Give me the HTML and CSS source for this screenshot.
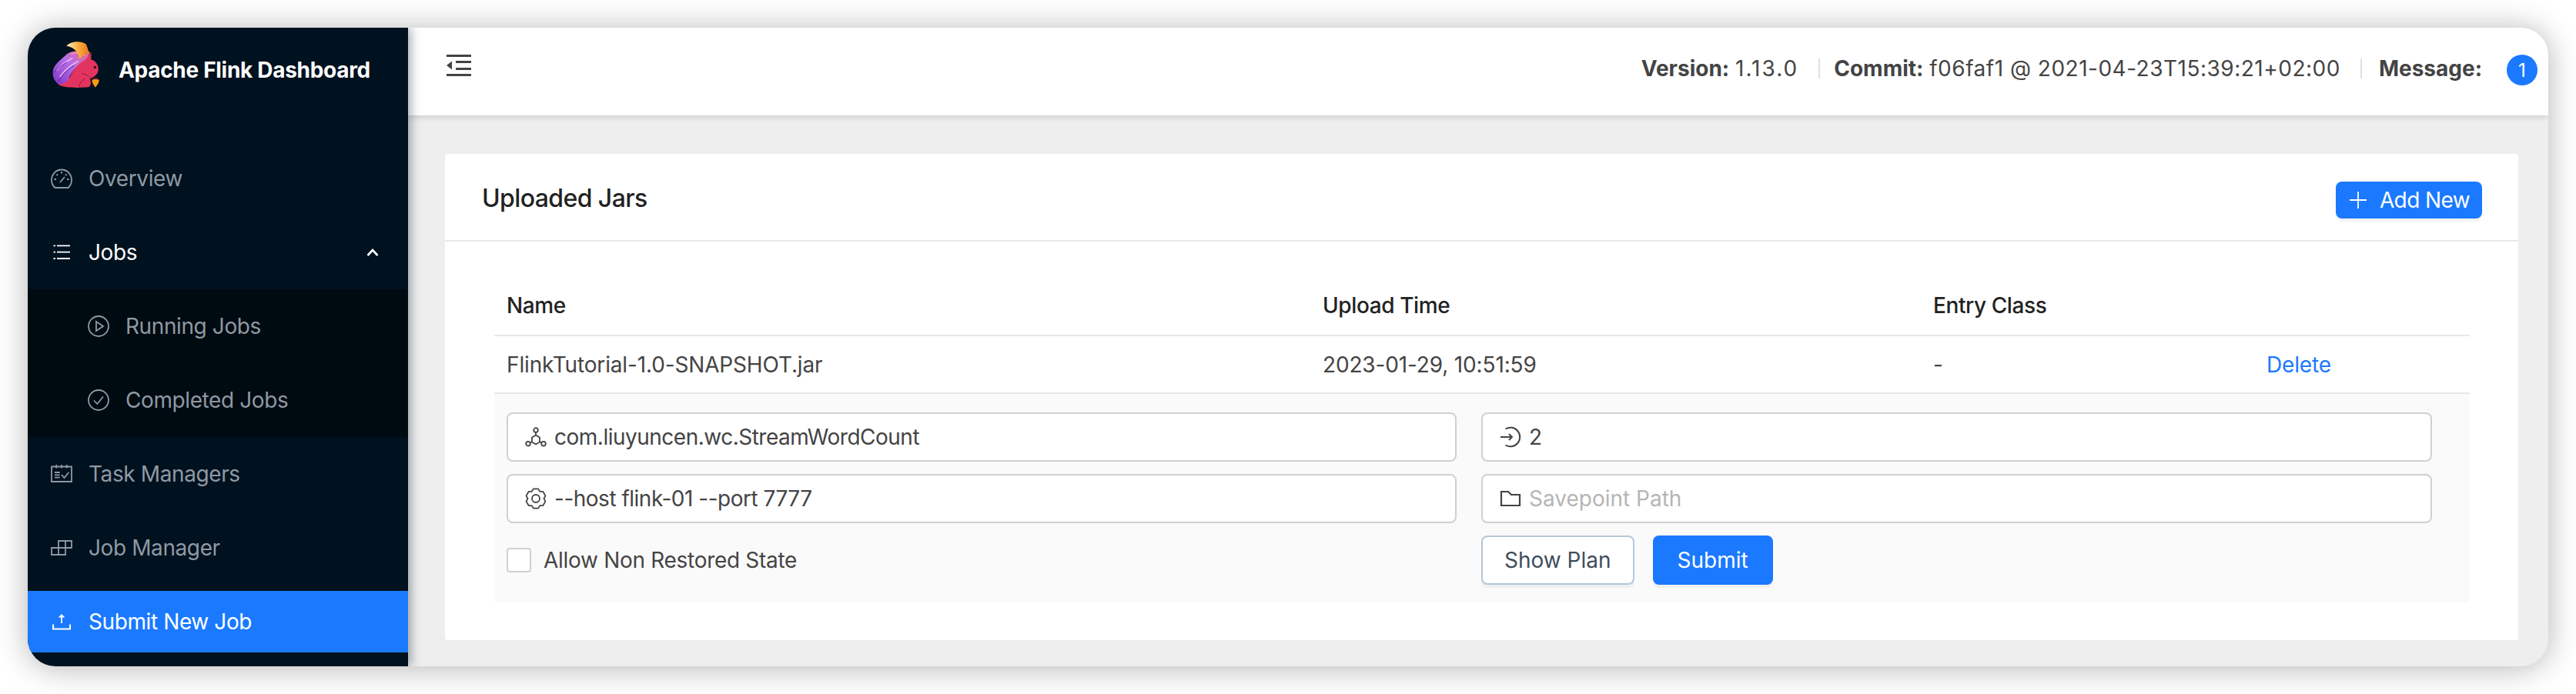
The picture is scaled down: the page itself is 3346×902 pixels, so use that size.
FILE: index.html
```html
<!DOCTYPE html>
<html lang="en">
<head>
    <meta charset="UTF-8">
    <meta name="viewport" content="width=device-width, initial-scale=1.0">
    <title>Apache Flink Dashboard</title>
    <link rel="stylesheet" href="styles.css">
</head>
<body>
    <div class="window">
        <aside class="sidebar">
            <div class="logo">
                <svg class="logo-mark" viewBox="140 95 190 190">
                    <defs>
                        <linearGradient id="tailFill" x1="0" y1="1" x2="1" y2="0">
                            <stop offset="0" stop-color="#7a2fc0"/>
                            <stop offset="0.55" stop-color="#b56ee8"/>
                            <stop offset="1" stop-color="#ee6a86"/>
                        </linearGradient>
                        <linearGradient id="tipFill" x1="0" y1="0" x2="1" y2="0">
                            <stop offset="0" stop-color="#fff3c8"/>
                            <stop offset="0.5" stop-color="#fbb040"/>
                            <stop offset="1" stop-color="#e8761a"/>
                        </linearGradient>
                    </defs>
                    <path fill="url(#tailFill)" d="M172 272C150 258 140 235 147 208C153 190 176 172 200 150C225 132 262 138 292 142L276 176C250 188 226 206 210 240L208 278Z"/>
                    <path fill="none" stroke="#e8b6f5" stroke-width="5" d="M160 215C175 195 195 180 222 166M172 240C190 215 212 195 245 178"/>
                    <path fill="none" stroke="#5a1f96" stroke-width="3" d="M150 222C165 205 180 195 200 182M166 258C180 232 200 212 228 195"/>
                    <path fill="none" stroke="#f7a0b0" stroke-width="4" d="M215 150C235 142 255 145 272 155"/>
                    <path fill="url(#tipFill)" d="M198 118C218 96 262 98 276 112L288 148C270 146 262 160 248 170C248 145 228 122 198 118Z"/>
                    <path fill="#e3345f" d="M165 268C178 280 210 282 240 282L285 280C296 274 296 262 290 248C302 240 312 238 320 224C328 208 322 190 308 178C302 174 298 172 294 172L296 144L270 174C248 184 226 208 210 244C200 262 182 270 165 268Z"/>
                    <path fill="none" stroke="#8c1c40" stroke-width="3" d="M258 226C278 228 290 240 296 250M272 246C260 252 250 262 248 278"/>
                    <circle cx="310" cy="202" r="5" fill="#2a0a18"/>
                    <path fill="#f59c12" d="M298 252C306 246 320 246 326 252C326 266 316 274 312 281C306 274 298 264 298 252Z"/>
                    <path fill="#5f1530" d="M298 252C304 238 322 238 326 252C318 248 306 248 298 252Z"/>
                </svg>
                <h1 class="logo-title">Apache Flink Dashboard</h1>
            </div>
            <nav class="menu">
                <a class="menu-item">
                    <svg class="menu-icon" viewBox="0 0 28 28" fill="none" stroke="currentColor" stroke-width="1.800">
                        <path d="M5.500 26C2.500 23.500 1 20.200 1 16C1 8.500 6.800 2.500 14 2.500S27 8.500 27 16C27 20.200 25.500 23.500 22.500 26Z"/>
                        <path d="M14 5V7.500M4.500 15H7M21 15H23.500M7.500 8.500L9 10M20.500 8.500L19 10M12 19L18 12"/>
                    </svg>
                    <span>Overview</span>
                </a>
                <a class="menu-item menu-open">
                    <svg class="menu-icon" viewBox="0 0 28 28" fill="none" stroke="currentColor" stroke-width="1.800">
                        <path d="M8 5.300H25M8 13.600H25M8 22H25M3.500 5.300H6M3.500 13.600H6M3.500 22H6"/>
                    </svg>
                    <span>Jobs</span>
                    <svg class="menu-arrow" viewBox="0 0 16 12" fill="none" stroke="currentColor" stroke-width="2.600">
                        <path d="M1.500 10L8 3L14.500 10"/>
                    </svg>
                </a>
                <div class="submenu">
                    <a class="menu-item">
                        <svg class="menu-icon" viewBox="0 0 28 28" fill="none" stroke="currentColor" stroke-width="1.800">
                            <circle cx="14" cy="14" r="13"/>
                            <path d="M11 8L20 14L11 20Z"/>
                        </svg>
                        <span>Running Jobs</span>
                    </a>
                    <a class="menu-item">
                        <svg class="menu-icon" viewBox="0 0 28 28" fill="none" stroke="currentColor" stroke-width="1.800">
                            <circle cx="14" cy="14" r="13"/>
                            <path d="M8 14.500L12.300 19L20 9.500"/>
                        </svg>
                        <span>Completed Jobs</span>
                    </a>
                </div>
                <a class="menu-item">
                    <svg class="menu-icon" viewBox="0 0 28 28" fill="none" stroke="currentColor" stroke-width="1.800">
                        <path d="M1 4.500H27V24H1ZM7.300 2V6.500M14 2V6.500M20.700 2V6.500"/>
                        <path d="M5 12H11.700M5 15.300H11.700M5 18.700H11.700M14 15L17.500 19L23.300 12"/>
                    </svg>
                    <span>Task Managers</span>
                </a>
                <a class="menu-item">
                    <svg class="menu-icon" viewBox="0 0 28 28" fill="none" stroke="currentColor" stroke-width="1.800">
                        <path d="M1 14H19V23H1ZM10 14V23M10 14V5H27V14H19M19 5V14"/>
                    </svg>
                    <span>Job Manager</span>
                </a>
                <a class="menu-item menu-active">
                    <svg class="menu-icon" viewBox="0 0 28 28" fill="none" stroke="currentColor" stroke-width="2">
                        <path d="M3 17.500V23.500H25V17.500M14 16V7"/>
                        <path fill="currentColor" stroke="none" d="M9.700 8.500L14 4L18.300 8.500Z"/>
                    </svg>
                    <span>Submit New Job</span>
                </a>
            </nav>
        </aside>
        <div class="main">
            <header class="topbar">
                <svg class="trigger" viewBox="0 0 32 28" fill="#444">
                    <path d="M0 0H32V3H0ZM12 8H32V11H12ZM12 17H32V20H12ZM0 25H32V28H0ZM0 14L7 8.500V19.500Z"/>
                </svg>
                <div class="topbar-info">
                    <span class="info-item"><b>Version:</b> <span class="version-value">1.13.0</span></span>
                    <span class="info-item"><b>Commit:</b> <span class="commit-value">f06faf1 @ 2021-04-23T15:39:21+02:00</span></span>
                    <span class="info-item info-message"><b>Message:</b></span>
                    <span class="badge">1</span>
                </div>
            </header>
            <main class="content">
                <section class="card">
                    <div class="card-head">
                        <h2 class="card-title">Uploaded Jars</h2>
                        <button class="btn btn-primary btn-small">
                            <svg class="plus" viewBox="0 0 22 22" fill="none" stroke="currentColor" stroke-width="1.800"><path d="M11 0V22M0 11H22"/></svg>
                            Add New
                        </button>
                    </div>
                    <div class="card-body">
                        <div class="row row-head">
                            <div>Name</div>
                            <div>Upload Time</div>
                            <div>Entry Class</div>
                            <div></div>
                        </div>
                        <div class="row">
                            <div>FlinkTutorial-1.0-SNAPSHOT.jar</div>
                            <div>2023-01-29, 10:51:59</div>
                            <div>-</div>
                            <div><a class="link">Delete</a></div>
                        </div>
                        <div class="expand">
                            <div class="field">
                                <svg class="field-icon" viewBox="0 0 28 28" fill="none" stroke="#444" stroke-width="1.800">
                                    <circle cx="14" cy="5" r="2.800"/>
                                    <circle cx="4" cy="22.700" r="2.800"/>
                                    <circle cx="24" cy="22.700" r="2.800"/>
                                    <path d="M14 11.500L19 14.500V20.500L14 23.500L9 20.500V14.500ZM14 8V11.500M9 20.500L6.500 21.500M19 20.500L21.500 21.500"/>
                                </svg>
                                <span>com.liuyuncen.wc.StreamWordCount</span>
                            </div>
                            <div class="field">
                                <svg class="field-icon" viewBox="0 0 28 28" fill="none" stroke="#444" stroke-width="2">
                                    <path d="M7.500 3.500A12.300 12.300 0 1 1 7.500 24.500M1 14H16M12 10L16 14L12 18"/>
                                </svg>
                                <span>2</span>
                            </div>
                            <div class="field">
                                <svg class="field-icon" viewBox="0 0 28 28" fill="none" stroke="#444" stroke-width="1.800" stroke-linejoin="round">
                                    <circle cx="14" cy="14" r="5"/>
                                    <path d="M10.850 1.400H17.150L19.250 4.910L23.350 4.970L26.500 10.400L24.500 14L26.500 17.600L23.350 23.030L19.250 23.090L17.150 26.600H10.850L8.750 23.090L4.650 23.030L1.500 17.600L3.500 14L1.500 10.400L4.650 4.970L8.750 4.910Z"/>
                                </svg>
                                <span>--host flink-01 --port 7777</span>
                            </div>
                            <div class="field">
                                <svg class="field-icon" viewBox="0 0 28 28" fill="none" stroke="#444" stroke-width="2.200">
                                    <path d="M2 23V5H11L15 9H26V23Z"/>
                                </svg>
                                <span class="placeholder">Savepoint Path</span>
                            </div>
                            <label class="check">
                                <span class="check-box"></span>
                                Allow Non Restored State
                            </label>
                            <div class="actions">
                                <button class="btn btn-plain">Show Plan</button>
                                <button class="btn btn-primary">Submit</button>
                            </div>
                        </div>
                    </div>
                </section>
            </main>
        </div>
    </div>
</body>
</html>
```

FILE: styles.css
```css
body {
    margin: 0;
    padding: 36px;
    background-color: #fff;
    font-family: Inter, "Liberation Sans", sans-serif;
    font-size: 28px;
    color: #444;
}

.window {
    display: flex;
    width: 3274px;
    height: 830px;
    border-radius: 36px;
    overflow: hidden;
    background-color: #eee;
    box-shadow: 0 2px 40px rgba(0, 0, 0, 0.3);
}

.sidebar {
    width: 494px;
    flex-shrink: 0;
    background-color: #00111f;
    box-shadow: 4px 0 12px rgba(0, 21, 41, 0.35);
    position: relative;
    z-index: 2;
}

.logo {
    display: flex;
    align-items: center;
    gap: 24px;
    height: 110px;
    padding-left: 31px;
}

.logo-mark {
    width: 63px;
    height: 63px;
    margin-top: -15px;
}

.logo-title {
    margin: 0;
    font-size: 28px;
    font-weight: 700;
    letter-spacing: -0.3px;
    color: #fff;
}

.menu {
    margin-top: 46px;
}

.menu-item {
    display: flex;
    align-items: center;
    gap: 21px;
    height: 80px;
    margin-bottom: 16px;
    padding-left: 30px;
    letter-spacing: -0.4px;
    color: #8f99a3;
}

.menu-icon {
    width: 28px;
    height: 28px;
}

.menu-open {
    color: #fff;
    margin-bottom: 8px;
}

.menu-arrow {
    width: 16px;
    height: 12px;
    margin-left: auto;
    margin-right: 38px;
}

.menu-active {
    background-color: #1a79ff;
    color: #fff;
    margin-bottom: 0;
}

.submenu {
    background-color: #000a11;
    padding: 8px 0;
    margin-bottom: 8px;
}

.submenu .menu-item {
    padding-left: 78px;
}

.submenu .menu-item:last-child {
    margin-bottom: 0;
}

.main {
    flex: 1;
    display: flex;
    flex-direction: column;
    min-width: 0;
}

.topbar {
    display: flex;
    align-items: center;
    justify-content: space-between;
    height: 114px;
    padding: 0 14px 0 50px;
    background-color: #fff;
    box-shadow: 0 2px 8px rgba(0, 0, 0, 0.15);
}

.trigger {
    width: 32px;
    height: 28px;
    margin-bottom: 16px;
}

.topbar-info {
    display: flex;
    align-items: center;
    margin-bottom: 8px;
}

.info-item {
    padding: 0 26px 0 18px;
    line-height: 26px;
    border-right: 2px solid #e0e0e0;
}

.version-value {
    letter-spacing: 2px;
}

.commit-value {
    letter-spacing: 0.5px;
}

.info-message {
    border-right: none;
    padding: 0 32px 0 22px;
}

.badge {
    display: flex;
    align-items: center;
    justify-content: center;
    width: 40px;
    height: 40px;
    border-radius: 50%;
    margin-top: 4px;
    background-color: #1a79ff;
    color: #fff;
    font-size: 24px;
}

.content {
    flex: 1;
    padding: 50px 39px 34px 48px;
}

.card {
    height: 632px;
    background-color: #fff;
    border-radius: 4px;
}

.card-head {
    display: flex;
    align-items: center;
    justify-content: space-between;
    height: 112px;
    padding: 0 47px 0 48px;
    border-bottom: 2px solid #e8e8e8;
}

.card-title {
    margin: 2px 0 0;
    font-size: 32px;
    font-weight: 500;
    letter-spacing: -0.6px;
    color: #222;
}

.card-body {
    padding: 0 63px 0 64px;
}

.btn {
    font-family: inherit;
    font-size: 28px;
    height: 64px;
    border-radius: 8px;
    cursor: pointer;
    box-shadow: 0 4px 0 rgba(0, 0, 0, 0.045);
}

.btn-primary {
    border: none;
    background-color: #1a79ff;
    color: #fff;
    padding: 0 32px;
}

.btn-small {
    display: flex;
    align-items: center;
    gap: 17px;
    height: 48px;
    margin-top: 8px;
    padding: 0 16px 0 18px;
    letter-spacing: -0.6px;
}

.plus {
    width: 22px;
    height: 22px;
}

.btn-plain {
    border: 2px solid #b5c7d8;
    background-color: #fff;
    color: #3f4d5c;
    padding: 0 28px;
}

.row {
    display: grid;
    grid-template-columns: 1060px 793px 433px 1fr;
    align-items: center;
    height: 75px;
    box-sizing: border-box;
    padding-left: 16px;
    letter-spacing: -0.15px;
    border-bottom: 2px solid #e8e8e8;
}

.row-head {
    height: 123px;
    padding-top: 44px;
    font-weight: 500;
    letter-spacing: -0.4px;
    color: #222;
}

.link {
    color: #1a79ff;
}

.expand {
    display: grid;
    grid-template-columns: 1234px 1235px;
    column-gap: 32px;
    row-gap: 16px;
    align-items: center;
    align-content: start;
    height: 271px;
    box-sizing: border-box;
    padding: 24px 0 0 16px;
    background-color: #fafafa;
}

.field {
    display: flex;
    align-items: center;
    gap: 10px;
    height: 64px;
    box-sizing: border-box;
    padding-left: 22px;
    letter-spacing: -0.5px;
    background-color: #fff;
    border: 2px solid #d0d0d0;
    border-radius: 8px;
}

.field-icon {
    width: 28px;
    height: 28px;
}

.placeholder {
    letter-spacing: 0;
    color: #b5b5b5;
}

.check {
    display: flex;
    align-items: center;
    gap: 16px;
    letter-spacing: -0.3px;
}

.check-box {
    width: 32px;
    height: 32px;
    box-sizing: border-box;
    background-color: #fff;
    border: 2px solid #d0d0d0;
    border-radius: 4px;
}

.actions {
    display: flex;
    gap: 24px;
}
```
